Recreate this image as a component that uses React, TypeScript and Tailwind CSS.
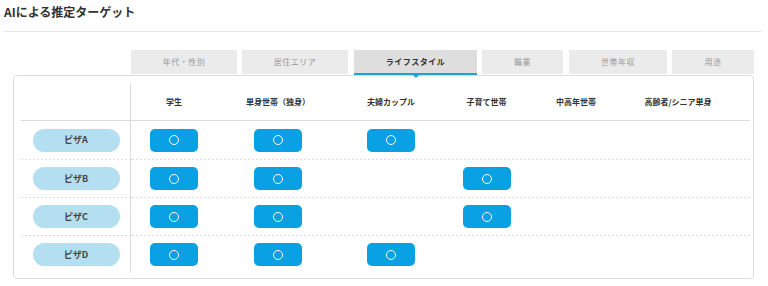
import React from "react";

const tabs = [
  { label: "年代・性別", w: "w-[106px]", ml: "ml-0" },
  { label: "居住エリア", w: "w-[106px]", ml: "ml-[5px]" },
  { label: "ライフスタイル", w: "w-[123px]", ml: "ml-[6px]", active: true },
  { label: "職業", w: "w-[81px]", ml: "ml-[5px]" },
  { label: "世帯年収", w: "w-[98px]", ml: "ml-[6px]" },
  { label: "用途", w: "w-[82px]", ml: "ml-[5px]" },
];

const cols = ["学生", "単身世帯（独身）", "夫婦カップル", "子育て世帯", "中高年世帯", "高齢者/シニア単身"];

const rows = [
  { name: "ピザA", v: [1, 1, 1, 0, 0, 0] },
  { name: "ピザB", v: [1, 1, 0, 1, 0, 0] },
  { name: "ピザC", v: [1, 1, 0, 1, 0, 0] },
  { name: "ピザD", v: [1, 1, 1, 0, 0, 0] },
];

const grid = "grid grid-cols-[86px_122px_104px_87px_92px_112px]";

function Dashed() {
  return (
    <div className="flex h-px">
      <div className="w-[110px] h-px bg-[linear-gradient(to_right,#dddddd_50%,transparent_50%)] bg-[length:4px_1px] bg-repeat-x" />
      <div className="w-px h-px bg-[#dcdcdc]" />
      <div className="flex-1 h-px bg-[linear-gradient(to_right,#dddddd_50%,transparent_50%)] bg-[length:4px_1px] bg-repeat-x" />
    </div>
  );
}

export default function App() {
  return (
    <div
      className="w-[768px] h-[286px] bg-white text-[#333] overflow-hidden"
      style={{ fontFamily: '"Noto Sans CJK JP", "Noto Sans", sans-serif' }}
    >
      <div className="pl-[4px] pt-[4px] h-[20px] text-[12px] leading-[16px] font-bold text-[#333]">
        AIによる推定ターゲット
      </div>
      <div className="ml-[4px] mr-[6px] mt-[11px] h-px bg-[#e6e6e6]" />

      <div className="mt-[18px] ml-[131px] flex h-[25px]">
        {tabs.map((t) =>
          t.active ? (
            <div
              key={t.label}
              className={`${t.w} ${t.ml} relative flex items-center justify-center bg-[#dedede] border-b-2 border-[#1ea0db] text-[8px] font-bold tracking-[0.5px] text-[#333]`}
            >
              {t.label}
              <div className="absolute left-1/2 -translate-x-1/2 top-full w-0 h-0 border-l-[5px] border-r-[5px] border-t-[5px] border-l-transparent border-r-transparent border-t-[#1ea0db] z-10" />
            </div>
          ) : (
            <div
              key={t.label}
              className={`${t.w} ${t.ml} flex items-center justify-center bg-[#ebebec] h-[24px] text-[8px] tracking-[0.5px] text-[#999]`}
            >
              {t.label}
            </div>
          )
        )}
      </div>

      <div className="ml-[13px] w-[741px] h-[204px] border border-[#dcdcdc] rounded-[4px] pt-[7px] pl-[7px] pr-[3px]">
        {/* header */}
        <div className="flex h-[37px]">
          <div className="w-[110px] border-r border-[#dcdcdc]" />
          <div className={grid}>
            {cols.map((c) => (
              <div key={c} className="flex items-center justify-center text-[8px] font-bold text-[#333] pt-[1px]">
                {c}
              </div>
            ))}
          </div>
        </div>
        <div className="h-px bg-[#dcdcdc]" />
        {rows.map((r, i) => (
          <React.Fragment key={r.name}>
            <div className={`flex ${i === 0 ? "h-[38px]" : "h-[37px]"}`}>
              <div className="w-[110px] border-r border-[#dcdcdc] flex items-center justify-center pl-[1px]">
                <div className="w-[87px] h-[23px] rounded-full bg-[#b3dff0] flex items-center justify-center text-[9px] font-bold text-[#444]">
                  {r.name}
                </div>
              </div>
              <div className={grid}>
                {r.v.map((on, j) => (
                  <div key={j} className="flex items-center justify-center">
                    {on ? (
                      <div className="w-[48px] h-[23px] rounded-[5px] bg-[#0aa0e4] flex items-center justify-center">
                        <div className="w-[10px] h-[10px] rounded-full border-[1.5px] border-white" />
                      </div>
                    ) : null}
                  </div>
                ))}
              </div>
            </div>
            {i < rows.length - 1 ? <Dashed /> : null}
          </React.Fragment>
        ))}
      </div>
    </div>
  );
}
